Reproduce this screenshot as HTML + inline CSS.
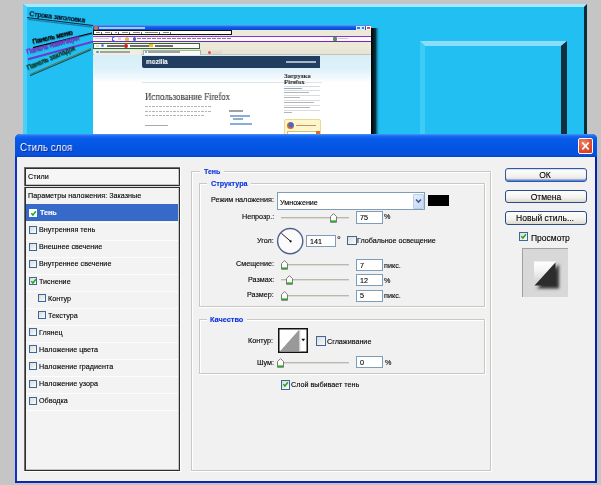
<!DOCTYPE html>
<html><head><meta charset="utf-8">
<style>
*{margin:0;padding:0;box-sizing:border-box}
html,body{width:601px;height:485px;overflow:hidden;background:#c6c5c5;-webkit-font-smoothing:antialiased;font-family:"Liberation Sans",sans-serif;position:relative}
.a{position:absolute}
.t{position:absolute;white-space:nowrap;line-height:1;color:#000;will-change:transform;-webkit-text-stroke:0.12px currentColor}
.cb{position:absolute;border:1px solid #3a67a0;background:linear-gradient(135deg,#dcdcd4,#fbfbf9)}
.inp{position:absolute;border:1px solid #7f9db9;background:#fff}
.btn{position:absolute;left:505px;width:82px;height:14px;border:1px solid #2a4a8c;border-radius:3px;background:linear-gradient(#fefefe,#f2f2ee 60%,#dcd8d0)}
.gh{position:absolute;height:2px;border-top:1px solid #c9c9c1;border-bottom:1px solid #fff}
.gv{position:absolute;width:2px;border-left:1px solid #c9c9c1;border-right:1px solid #fff}
</style></head><body>
<svg class="a" style="left:0;top:0" width="601" height="140">
<rect x="23" y="4" width="564" height="136" fill="#22c0f2"/>
<polygon points="23,4 587,4 584,7 27,7" fill="#a6e8fc"/>
<polygon points="23,4 27,7 27,140 23,140" fill="#4ccff8"/>
<polygon points="587,4 587,140 584,140 584,7" fill="#0d2c38"/>
<rect x="420" y="41" width="147" height="99" fill="#22c0f2"/>
<polygon points="420,41 567,41 561,46 425,46" fill="#8adefa"/>
<polygon points="420,41 425,46 425,140 420,140" fill="#3ecbf6"/>
<polygon points="567,41 567,140 561,140 561,46" fill="#10303e"/>
<defs><linearGradient id="sh" x1="0" x2="1" y1="0" y2="0"><stop offset="0" stop-color="#000"/><stop offset="0.5" stop-color="#0a3040"/><stop offset="1" stop-color="#22c0f2" stop-opacity="0"/></linearGradient></defs>
<rect x="371" y="28" width="9" height="112" fill="url(#sh)"/>
</svg>
<svg class="a" style="left:0;top:0" width="140" height="90"><path d="M28 19.3 L92 27" stroke="#0a3a5a" stroke-width="1.3" opacity="0.45"/><path d="M27 17.6 L94 25.6" stroke="#06102a" stroke-width="0.9"/><path d="M33 48.6 L92 34" stroke="#0a4a60" stroke-width="1" opacity="0.6"/><path d="M33 47.6 L92 33" stroke="#000" stroke-width="1.1"/><path d="M28 60 L93 42.3" stroke="#1a4a80" stroke-width="1" opacity="0.6"/><path d="M28 59 L93 41.3" stroke="#8a20d8" stroke-width="1.3"/><path d="M30 75.8 L91 49.8" stroke="#0a2a30" stroke-width="1.1" opacity="0.75"/><path d="M30 74.4 L91 48.4" stroke="#6a6a28" stroke-width="0.9"/></svg>
<div class="t" style="left:29.00px;top:9.60px;font-size:7.8px;color:#02081a;transform-origin:0 6.60px;transform:rotate(6.84deg) scaleX(0.88);text-shadow:0.3px 0 0 #02081a">Строка заголовка</div>
<div class="t" style="left:32.90px;top:38.07px;font-size:7.6px;color:#000;transform-origin:0 6.43px;transform:rotate(-13.42deg) scaleX(0.86);text-shadow:0.4px 0 0 #000,0.6px 0.8px 0 #0a5a70">Панель меню</div>
<div class="t" style="left:27.20px;top:48.17px;font-size:7.6px;color:#8a2ad0;transform-origin:0 6.43px;transform:rotate(-15.37deg) scaleX(0.84);text-shadow:0.4px 0 0 #8a2ad0,0.6px 0.8px 0 #2a4a80">Панель навигации</div>
<div class="t" style="left:28.40px;top:64.08px;font-size:7.7px;color:#163a28;transform-origin:0 6.52px;transform:rotate(-23.18deg) scaleX(0.85);text-shadow:0.4px 0 0 #163a28,0.6px 0.8px 0 #0a5a60">Панель закладок</div>
<div class="a" style="left:93px;top:25px;width:278px;height:109px;background:#fff;overflow:hidden"><div class="a" style="left:0;top:0;width:278px;height:5px;background:linear-gradient(#7aaaf6 0,#2a70ee 1px,#0a56e6 3px,#0848d4 5px)"></div><div class="a" style="left:0.5px;top:0.5px;width:4px;height:4px;border-radius:2px;background:#e8702a"></div><div class="a" style="left:6px;top:1.5px;width:46px;height:2px;background:#dfe8fa;opacity:.75"></div><div class="a" style="left:263px;top:0.5px;width:4.5px;height:4px;background:#3a78e8;border:0.5px solid #dfe8fa"></div><div class="a" style="left:267.5px;top:0.5px;width:4.5px;height:4px;background:#3a78e8;border:0.5px solid #dfe8fa"></div><div class="a" style="left:272.5px;top:0.5px;width:5px;height:4px;background:#e0502a;border:0.5px solid #fff"></div><div class="a" style="left:0;top:5px;width:278px;height:5.5px;background:#ece9d8"></div><div class="a" style="left:0;top:5px;width:139px;height:5px;border:1px solid #111;background:#fcfcfa"></div><div class="a" style="left:2px;top:6.5px;width:7px;height:2px;border-right:0.5px solid #666"></div><div class="a" style="left:3px;top:6.8px;width:4px;height:1.5px;background:#222;opacity:.55"></div><div class="a" style="left:11px;top:6.5px;width:8px;height:2px;border-right:0.5px solid #666"></div><div class="a" style="left:12px;top:6.8px;width:5px;height:1.5px;background:#222;opacity:.55"></div><div class="a" style="left:21px;top:6.5px;width:5px;height:2px;border-right:0.5px solid #666"></div><div class="a" style="left:22px;top:6.8px;width:2px;height:1.5px;background:#222;opacity:.55"></div><div class="a" style="left:28px;top:6.5px;width:9px;height:2px;border-right:0.5px solid #666"></div><div class="a" style="left:29px;top:6.8px;width:6px;height:1.5px;background:#222;opacity:.55"></div><div class="a" style="left:39px;top:6.5px;width:10px;height:2px;border-right:0.5px solid #666"></div><div class="a" style="left:40px;top:6.8px;width:7px;height:1.5px;background:#222;opacity:.55"></div><div class="a" style="left:51px;top:6.5px;width:16px;height:2px;border-right:0.5px solid #666"></div><div class="a" style="left:52px;top:6.8px;width:13px;height:1.5px;background:#222;opacity:.55"></div><div class="a" style="left:69px;top:6.5px;width:9px;height:2px;border-right:0.5px solid #666"></div><div class="a" style="left:70px;top:6.8px;width:6px;height:1.5px;background:#222;opacity:.55"></div><div class="a" style="left:0;top:10.5px;width:278px;height:6.5px;background:#fafaf8;border-top:1px solid #8c2edc;border-bottom:1px solid #7a24c4"></div><div class="a" style="left:2px;top:12.6px;width:14px;height:1.5px;background:#bbb;opacity:.6"></div><div class="a" style="left:18.5px;top:12px;width:3px;height:3.5px;border-radius:2px;border:1px solid #2a6ad0;border-right-color:transparent"></div><div class="a" style="left:25px;top:12px;width:3px;height:3px;background:#c8c8c0;opacity:.6"></div><div class="a" style="left:32px;top:12px;width:4px;height:3.5px;background:#e8c040;border-radius:2px 2px 0 0"></div><div class="a" style="left:39.5px;top:12px;width:3.5px;height:3.5px;border-radius:2px;background:#3a6ab8"></div><div class="a" style="left:44px;top:12.6px;width:95px;height:1.6px;background:repeating-linear-gradient(90deg,#334 0 4px,transparent 4px 5px);opacity:.6"></div><div class="a" style="left:240px;top:12px;width:3.5px;height:3.5px;background:#4a9a40;border-radius:1px"></div><div class="a" style="left:245px;top:12.8px;width:10px;height:1.4px;background:#999;opacity:.5"></div><div class="a" style="left:0;top:17px;width:278px;height:7px;background:#ece9d8"></div><div class="a" style="left:0;top:17.5px;width:107px;height:6.5px;border:1px solid #2c6a34;background:#fbfaf6"></div><div class="a" style="left:3px;top:19.5px;width:3px;height:2.5px;background:#e8e4c0"></div><div class="a" style="left:8px;top:19px;width:3px;height:3px;border-radius:2px;background:#5a8ae0"></div><div class="a" style="left:14px;top:20.2px;width:17px;height:1.5px;background:#222;opacity:.65"></div><div class="a" style="left:31px;top:19px;width:3.5px;height:3.5px;border-radius:2px;background:#d01818"></div><div class="a" style="left:37px;top:20.2px;width:22px;height:1.5px;background:#222;opacity:.65"></div><div class="a" style="left:56px;top:19px;width:3.5px;height:3px;background:#f0c020"></div><div class="a" style="left:62px;top:20.2px;width:18px;height:1.5px;background:#222;opacity:.65"></div><div class="a" style="left:0;top:24px;width:278px;height:6px;background:#e8e4d6;border-bottom:0.5px solid #c8c4b4"></div><div class="a" style="left:1px;top:24.5px;width:47px;height:5px;background:#f0ede2"></div><div class="a" style="left:3px;top:25.5px;width:2.5px;height:2.5px;border-radius:2px;background:#5a8ae0"></div><div class="a" style="left:7px;top:26.3px;width:30px;height:1.4px;background:#555;opacity:.5"></div><div class="a" style="left:50px;top:24.5px;width:58px;height:5.5px;background:#fafaf6;border:0.5px solid #b0b0a0;border-bottom:none"></div><div class="a" style="left:51.5px;top:25.5px;width:2.5px;height:2.5px;border-radius:2px;background:#3a9ad0"></div><div class="a" style="left:55px;top:26.3px;width:32px;height:1.3px;background:#333;opacity:.45"></div><div class="a" style="left:115px;top:25.5px;width:3px;height:3px;border-radius:2px;background:#e05050"></div><div class="a" style="left:119px;top:25.5px;width:10px;height:3px;background:#dedad0"></div><div class="a" style="left:0;top:30px;width:278px;height:28px;background:linear-gradient(#d6eef8,#e0f2fa 55%,#fff)"></div><div class="a" style="left:49px;top:30.5px;width:178px;height:12px;background:#213d60;border-radius:0 0 0 2px"></div><div class="t" style="left:52.6px;top:33.2px;font-size:7.6px;font-weight:bold;color:#f4f6fa;transform-origin:0 0;transform:scaleX(0.84)">mozilla</div><div class="a" style="left:193px;top:35.5px;width:30px;height:2px;background:#c8d4e0;opacity:.8"></div><div class="a" style="left:49px;top:57px;width:180px;height:1px;background:#dde4ea"></div><div class="t" style="left:52px;top:67.3px;font-family:'Liberation Serif',serif;font-size:9.8px;color:#3a3a3a;transform-origin:0 0;transform:scaleX(0.9)">Использование Firefox</div><div class="a" style="left:52px;top:81px;width:67px;height:1.4px;background:repeating-linear-gradient(90deg,#777 0 3px,transparent 3px 4px,#777 4px 6px,transparent 6px 7px);opacity:.55"></div><div class="a" style="left:52px;top:85.5px;width:67px;height:1.4px;background:repeating-linear-gradient(90deg,#777 0 3px,transparent 3px 4px,#777 4px 6px,transparent 6px 7px);opacity:.55"></div><div class="a" style="left:52px;top:90px;width:60px;height:1.4px;background:repeating-linear-gradient(90deg,#777 0 3px,transparent 3px 4px,#777 4px 6px,transparent 6px 7px);opacity:.55"></div><div class="a" style="left:52px;top:99.8px;width:23px;height:1.4px;background:#555;opacity:.5"></div><div class="a" style="left:136px;top:84.5px;width:14px;height:2px;background:#444;opacity:.5"></div><div class="a" style="left:137px;top:90px;width:20px;height:1.5px;background:#3a7ab8;opacity:.6"></div><div class="a" style="left:140px;top:93px;width:10px;height:1.5px;background:#3a7ab8;opacity:.6"></div><div class="a" style="left:137px;top:98px;width:22px;height:1.5px;background:#3a7ab8;opacity:.6"></div><div class="t" style="left:191px;top:49.3px;font-family:'Liberation Serif',serif;font-size:7px;font-weight:bold;color:#333;line-height:0.8;transform-origin:0 0;transform:scaleX(0.95)">Загрузка<br>Firefox</div><div class="a" style="left:191px;top:60.5px;width:36px;height:1px;background:#d8dce0"></div><div class="a" style="left:191px;top:65px;width:36px;height:1px;background:#d8dce0"></div><div class="a" style="left:191px;top:70px;width:36px;height:1px;background:#d8dce0"></div><div class="a" style="left:191px;top:75px;width:36px;height:1px;background:#d8dce0"></div><div class="a" style="left:191px;top:80px;width:36px;height:1px;background:#d8dce0"></div><div class="a" style="left:191px;top:85px;width:36px;height:1px;background:#d8dce0"></div><div class="a" style="left:191px;top:62.5px;width:18px;height:1.3px;background:#2a6aa0;opacity:.55"></div><div class="a" style="left:191px;top:67px;width:25px;height:1.3px;background:#777;opacity:.55"></div><div class="a" style="left:191px;top:72px;width:16px;height:1.3px;background:#777;opacity:.55"></div><div class="a" style="left:191px;top:77px;width:30px;height:1.3px;background:#777;opacity:.55"></div><div class="a" style="left:191px;top:82px;width:26px;height:1.3px;background:#777;opacity:.55"></div><div class="a" style="left:191px;top:87px;width:8px;height:1.3px;background:#777;opacity:.55"></div><div class="a" style="left:191px;top:94px;width:37px;height:20px;background:#fdf6cc;border:0.5px solid #e8d890;border-radius:2px"></div><div class="a" style="left:194px;top:97px;width:7px;height:7px;border-radius:4px;background:radial-gradient(circle at 60% 40%,#3a6ad0 30%,#e86a1a 60%)"></div><div class="a" style="left:203px;top:99.5px;width:20px;height:1.5px;background:#a05020;opacity:.6"></div><div class="a" style="left:194px;top:106px;width:30px;height:5px;background:#fff;border:0.5px solid #d0c080"></div><div class="a" style="left:223px;top:106px;width:4px;height:5px;background:#e06a20"></div></div><div class="a" style="left:15px;top:134px;width:582px;height:349px;background:#0a28b0;border-radius:5px 5px 0 0"></div>
<div class="a" style="left:15px;top:134px;width:582px;height:23px;border-radius:5px 5px 0 0;background:linear-gradient(#4a94fa 0px,#1a6af2 2px,#075ae8 5px,#0454e2 14px,#0650dc 19px,#0a50de 21px,#0440c8 23px)"></div>
<div class="a" style="left:15px;top:157px;width:2px;height:324px;background:#0b35c8"></div>
<div class="a" style="left:595px;top:157px;width:2px;height:324px;background:#0724a8"></div>
<div class="a" style="left:17px;top:157px;width:578px;height:324px;background:#f1f1f1"></div>
<div class="t" style="left:20px;top:143px;font-size:10.2px;color:#fff;font-weight:normal;transform-origin:0 0;transform:scaleX(0.95);letter-spacing:0.1px;-webkit-text-stroke:0;text-shadow:1px 1px 0 #0a2a90">Стиль слоя</div>
<div class="a" style="left:578px;top:138px;width:15px;height:16px;border:1px solid #fff;border-radius:2px;background:radial-gradient(circle at 35% 30%,#f08a6a,#e0482a 60%,#c83a1c)"></div>
<svg class="a" style="left:578px;top:138px" width="15" height="16"><path d="M4.3 4.5 L10.7 11.5 M10.7 4.5 L4.3 11.5" stroke="#fff" stroke-width="1.8"/></svg>
<div class="a" style="left:24px;top:167px;width:157px;height:20px;background:#fff"></div>
<div class="a" style="left:24px;top:167px;width:156px;height:1px;background:#6c6c6c"></div>
<div class="a" style="left:24px;top:167px;width:1px;height:19px;background:#6c6c6c"></div>
<div class="a" style="left:25px;top:168px;width:155px;height:18px;background:#2e2e2e"></div>
<div class="a" style="left:26px;top:169px;width:153px;height:16px;background:#c4c4c4"></div>
<div class="a" style="left:26px;top:169px;width:152px;height:15px;background:#f6f6f6"></div>
<div class="a" style="left:24px;top:186px;width:157px;height:286px;background:#fff"></div>
<div class="a" style="left:24px;top:186px;width:156px;height:1px;background:#6c6c6c"></div>
<div class="a" style="left:24px;top:186px;width:1px;height:285px;background:#6c6c6c"></div>
<div class="a" style="left:25px;top:187px;width:155px;height:284px;background:#2e2e2e"></div>
<div class="a" style="left:26px;top:188px;width:153px;height:282px;background:#c4c4c4"></div>
<div class="a" style="left:26px;top:188px;width:152px;height:281px;background:#f3f3f3"></div>
<div class="a" style="left:24px;top:186px;width:157px;height:1px;background:#dedede"></div>
<div class="t" style="left:28px;top:173px;font-size:7.2px;color:#000;font-weight:normal;">Стили</div>
<div class="t" style="left:28px;top:192px;font-size:7.2px;color:#000;font-weight:normal;">Параметры наложения: Заказные</div>
<div class="a" style="left:26px;top:204px;width:152px;height:17px;background:#3669c8"></div>
<div class="a" style="left:26px;top:222px;width:152px;height:1px;background:#fdfdfd"></div>
<div class="a" style="left:26px;top:240px;width:152px;height:1px;background:#fdfdfd"></div>
<div class="a" style="left:26px;top:257px;width:152px;height:1px;background:#fdfdfd"></div>
<div class="a" style="left:26px;top:274px;width:152px;height:1px;background:#fdfdfd"></div>
<div class="a" style="left:26px;top:291px;width:152px;height:1px;background:#fdfdfd"></div>
<div class="a" style="left:26px;top:308px;width:152px;height:1px;background:#fdfdfd"></div>
<div class="a" style="left:26px;top:325px;width:152px;height:1px;background:#fdfdfd"></div>
<div class="a" style="left:26px;top:342px;width:152px;height:1px;background:#fdfdfd"></div>
<div class="a" style="left:26px;top:359px;width:152px;height:1px;background:#fdfdfd"></div>
<div class="a" style="left:26px;top:376px;width:152px;height:1px;background:#fdfdfd"></div>
<div class="a" style="left:26px;top:393px;width:152px;height:1px;background:#fdfdfd"></div>
<div class="a" style="left:26px;top:410px;width:152px;height:1px;background:#fdfdfd"></div>
<div class="cb" style="left:29px;top:209px;width:8px;height:8px;background:#fff;border-color:#fff"><svg width="9" height="9" viewBox="0 0 9 9" style="position:absolute;left:-1px;top:-1px"><path d="M2.3 4.2 L3.9 6 L6.9 2.3" stroke="#1fa81f" stroke-width="1.5" fill="none"/></svg></div>
<div class="t" style="left:40px;top:209px;font-size:7.2px;color:#fff;font-weight:bold;">Тень</div>
<div class="cb" style="left:29px;top:226px;width:8px;height:8px"></div>
<div class="t" style="left:39px;top:226px;font-size:7.2px;color:#000;font-weight:normal;">Внутренняя тень</div>
<div class="cb" style="left:29px;top:243px;width:8px;height:8px"></div>
<div class="t" style="left:39px;top:243px;font-size:7.2px;color:#000;font-weight:normal;">Внешнее свечение</div>
<div class="cb" style="left:29px;top:260px;width:8px;height:8px"></div>
<div class="t" style="left:39px;top:260px;font-size:7.2px;color:#000;font-weight:normal;">Внутреннее свечение</div>
<div class="cb" style="left:29px;top:277px;width:8px;height:8px"><svg width="9" height="9" viewBox="0 0 9 9" style="position:absolute;left:-1px;top:-1px"><path d="M2.3 4.2 L3.9 6 L6.9 2.3" stroke="#1fa81f" stroke-width="1.5" fill="none"/></svg></div>
<div class="t" style="left:39px;top:278px;font-size:7.2px;color:#000;font-weight:normal;">Тиснение</div>
<div class="cb" style="left:38px;top:294px;width:8px;height:8px"></div>
<div class="t" style="left:48px;top:295px;font-size:7.2px;color:#000;font-weight:normal;">Контур</div>
<div class="cb" style="left:38px;top:311px;width:8px;height:8px"></div>
<div class="t" style="left:48px;top:312px;font-size:7.2px;color:#000;font-weight:normal;">Текстура</div>
<div class="cb" style="left:29px;top:328px;width:8px;height:8px"></div>
<div class="t" style="left:39px;top:329px;font-size:7.2px;color:#000;font-weight:normal;">Глянец</div>
<div class="cb" style="left:29px;top:345px;width:8px;height:8px"></div>
<div class="t" style="left:39px;top:346px;font-size:7.2px;color:#000;font-weight:normal;">Наложение цвета</div>
<div class="cb" style="left:29px;top:362px;width:8px;height:8px"></div>
<div class="t" style="left:39px;top:363px;font-size:7.2px;color:#000;font-weight:normal;">Наложение градиента</div>
<div class="cb" style="left:29px;top:380px;width:8px;height:8px"></div>
<div class="t" style="left:39px;top:380px;font-size:7.2px;color:#000;font-weight:normal;">Наложение узора</div>
<div class="cb" style="left:29px;top:397px;width:8px;height:8px"></div>
<div class="t" style="left:39px;top:397px;font-size:7.2px;color:#000;font-weight:normal;">Обводка</div>
<div class="a" style="left:191px;top:171px;width:1px;height:299px;background:#c9c9c1"></div>
<div class="a" style="left:192px;top:172px;width:1px;height:298px;background:#fff"></div>
<div class="a" style="left:490px;top:171px;width:1px;height:300px;background:#c9c9c1"></div>
<div class="a" style="left:491px;top:171px;width:1px;height:301px;background:#fff"></div>
<div class="a" style="left:191px;top:470px;width:300px;height:1px;background:#c9c9c1"></div>
<div class="a" style="left:191px;top:471px;width:301px;height:1px;background:#fff"></div>
<div class="a" style="left:191px;top:171px;width:300px;height:1px;background:#c9c9c1"></div>
<div class="a" style="left:192px;top:172px;width:298px;height:1px;background:#fff"></div>
<div class="a" style="left:200px;top:168px;width:24px;height:8px;background:#f1f1f1"></div>
<div class="t" style="left:204px;top:168px;font-size:7.0px;color:#0a32e0;font-weight:bold;">Тень</div>
<div class="a" style="left:199px;top:183px;width:1px;height:123px;background:#c9c9c1"></div>
<div class="a" style="left:200px;top:184px;width:1px;height:122px;background:#fff"></div>
<div class="a" style="left:484px;top:183px;width:1px;height:124px;background:#c9c9c1"></div>
<div class="a" style="left:485px;top:183px;width:1px;height:125px;background:#fff"></div>
<div class="a" style="left:199px;top:306px;width:286px;height:1px;background:#c9c9c1"></div>
<div class="a" style="left:199px;top:307px;width:287px;height:1px;background:#fff"></div>
<div class="a" style="left:199px;top:183px;width:286px;height:1px;background:#c9c9c1"></div>
<div class="a" style="left:200px;top:184px;width:284px;height:1px;background:#fff"></div>
<div class="a" style="left:207px;top:180px;width:44px;height:8px;background:#f1f1f1"></div>
<div class="t" style="left:211px;top:180px;font-size:7.2px;color:#0a32e0;font-weight:bold;">Структура</div>
<div class="a" style="left:199px;top:319px;width:1px;height:54px;background:#c9c9c1"></div>
<div class="a" style="left:200px;top:320px;width:1px;height:53px;background:#fff"></div>
<div class="a" style="left:484px;top:319px;width:1px;height:55px;background:#c9c9c1"></div>
<div class="a" style="left:485px;top:319px;width:1px;height:56px;background:#fff"></div>
<div class="a" style="left:199px;top:373px;width:286px;height:1px;background:#c9c9c1"></div>
<div class="a" style="left:199px;top:374px;width:287px;height:1px;background:#fff"></div>
<div class="a" style="left:199px;top:319px;width:286px;height:1px;background:#c9c9c1"></div>
<div class="a" style="left:200px;top:320px;width:284px;height:1px;background:#fff"></div>
<div class="a" style="left:207px;top:316px;width:40px;height:8px;background:#f1f1f1"></div>
<div class="t" style="left:210px;top:316px;font-size:7.35px;color:#0a32e0;font-weight:bold;">Качество</div>
<div class="t" style="right:327px;top:196px;font-size:7.2px;color:#000;font-weight:normal;">Режим наложения:</div>
<div class="a" style="left:277px;top:192px;width:148px;height:18px;border:1px solid #7f9db9;background:#fff"></div>
<div class="t" style="left:280px;top:199px;font-size:7.2px;color:#000;font-weight:normal;">Умножение</div>
<div class="a" style="left:413px;top:193.5px;width:10.5px;height:15px;background:linear-gradient(135deg,#e4eefc,#c4d6f4);border:0.5px solid #b8cceb;border-radius:1px"></div>
<svg class="a" style="left:413px;top:193px" width="11" height="16"><path d="M3 6.5 L5.5 9 L8 6.5" stroke="#4a5a88" stroke-width="1.6" fill="none"/></svg>
<div class="a" style="left:427.5px;top:194.5px;width:21px;height:11.5px;background:#000"></div>
<div class="t" style="right:327px;top:213px;font-size:7.2px;color:#000;font-weight:normal;">Непрозр.:</div>
<div class="a" style="left:281px;top:217px;width:68px;height:1px;background:#b8b8b0"></div>
<div class="a" style="left:281px;top:218px;width:68px;height:1px;background:#dcdcd4"></div>
<svg class="a" style="left:329.8px;top:213px" width="7" height="10" viewBox="0 0 7 10"><path d="M0.5 3.6 L3.5 0.6 L6.5 3.6 L6.5 9.3 L0.5 9.3 Z" fill="#fdfdfb" stroke="#6e6e66" stroke-width="0.9"/><rect x="0.9" y="7.4" width="5.2" height="1.6" fill="#22b022"/></svg>
<div class="inp" style="left:356px;top:211px;width:27px;height:13px"></div>
<div class="t" style="left:360px;top:214px;font-size:7.2px;color:#000;font-weight:normal;">75</div>
<div class="t" style="left:384px;top:213px;font-size:7.2px;color:#000;font-weight:normal;">%</div>
<div class="t" style="right:327px;top:237px;font-size:7.2px;color:#000;font-weight:normal;">Угол:</div>
<svg class="a" style="left:276px;top:226px" width="29" height="30"><circle cx="14.2" cy="15.1" r="12.6" fill="#fbfbfb" stroke="#50618e" stroke-width="1.4"/><path d="M14.6 15.3 L5.4 7.3" stroke="#222" stroke-width="1"/><circle cx="14.6" cy="15.3" r="1.1" fill="#111"/></svg>
<div class="inp" style="left:306px;top:234.5px;width:30px;height:12.5px"></div>
<div class="t" style="left:310px;top:238px;font-size:7.2px;color:#000;font-weight:normal;">141</div>
<div class="t" style="left:337px;top:235px;font-size:9.5px;color:#111;font-weight:normal;">°</div>
<div class="cb" style="left:347px;top:235.5px;width:9.5px;height:9.5px"></div>
<div class="t" style="left:357px;top:237px;font-size:7.2px;color:#000;font-weight:normal;">Глобальное освещение</div>
<div class="t" style="right:327px;top:260px;font-size:7.2px;color:#000;font-weight:normal;">Смещение:</div>
<div class="a" style="left:281px;top:263.5px;width:68px;height:1px;background:#b8b8b0"></div>
<div class="a" style="left:281px;top:264.5px;width:68px;height:1px;background:#dcdcd4"></div>
<svg class="a" style="left:281.2px;top:259.5px" width="7" height="10" viewBox="0 0 7 10"><path d="M0.5 3.6 L3.5 0.6 L6.5 3.6 L6.5 9.3 L0.5 9.3 Z" fill="#fdfdfb" stroke="#6e6e66" stroke-width="0.9"/><rect x="0.9" y="7.4" width="5.2" height="1.6" fill="#22b022"/></svg>
<div class="inp" style="left:356px;top:258.5px;width:27px;height:12px"></div>
<div class="t" style="left:360px;top:262px;font-size:7.2px;color:#000;font-weight:normal;">7</div>
<div class="t" style="left:384px;top:262px;font-size:7.2px;color:#000;font-weight:normal;">пикс.</div>
<div class="t" style="right:327px;top:276px;font-size:7.2px;color:#000;font-weight:normal;">Размах:</div>
<div class="a" style="left:281px;top:279px;width:68px;height:1px;background:#b8b8b0"></div>
<div class="a" style="left:281px;top:280px;width:68px;height:1px;background:#dcdcd4"></div>
<svg class="a" style="left:285.7px;top:275px" width="7" height="10" viewBox="0 0 7 10"><path d="M0.5 3.6 L3.5 0.6 L6.5 3.6 L6.5 9.3 L0.5 9.3 Z" fill="#fdfdfb" stroke="#6e6e66" stroke-width="0.9"/><rect x="0.9" y="7.4" width="5.2" height="1.6" fill="#22b022"/></svg>
<div class="inp" style="left:356px;top:274px;width:27px;height:12px"></div>
<div class="t" style="left:360px;top:277px;font-size:7.2px;color:#000;font-weight:normal;">12</div>
<div class="t" style="left:384px;top:277px;font-size:7.2px;color:#000;font-weight:normal;">%</div>
<div class="t" style="right:327px;top:291px;font-size:7.2px;color:#000;font-weight:normal;">Размер:</div>
<div class="a" style="left:281px;top:294.5px;width:68px;height:1px;background:#b8b8b0"></div>
<div class="a" style="left:281px;top:295.5px;width:68px;height:1px;background:#dcdcd4"></div>
<svg class="a" style="left:281.2px;top:290.5px" width="7" height="10" viewBox="0 0 7 10"><path d="M0.5 3.6 L3.5 0.6 L6.5 3.6 L6.5 9.3 L0.5 9.3 Z" fill="#fdfdfb" stroke="#6e6e66" stroke-width="0.9"/><rect x="0.9" y="7.4" width="5.2" height="1.6" fill="#22b022"/></svg>
<div class="inp" style="left:356px;top:289.5px;width:27px;height:12px"></div>
<div class="t" style="left:360px;top:292px;font-size:7.2px;color:#000;font-weight:normal;">5</div>
<div class="t" style="left:384px;top:292px;font-size:7.2px;color:#000;font-weight:normal;">пикс.</div>
<div class="t" style="right:328px;top:337px;font-size:7.2px;color:#000;font-weight:normal;">Контур:</div>
<svg class="a" style="left:278px;top:328px" width="30" height="25"><rect x="0.75" y="0.75" width="28.5" height="23.5" fill="#fff" stroke="#111" stroke-width="1.5"/><polygon points="2,23.2 21.3,1.6 21.3,23.2" fill="#999"/><rect x="21.3" y="1.5" width="1" height="22" fill="#c8c8c8"/><path d="M23.3 10.8 L27.2 10.8 L25.25 13.3 Z" fill="#111"/></svg>
<div class="cb" style="left:316px;top:336px;width:9.5px;height:9.5px"></div>
<div class="t" style="left:327px;top:338px;font-size:7.2px;color:#000;font-weight:normal;">Сглаживание</div>
<div class="t" style="right:327px;top:359px;font-size:7.2px;color:#000;font-weight:normal;">Шум:</div>
<div class="a" style="left:281px;top:362px;width:68px;height:1px;background:#b8b8b0"></div>
<div class="a" style="left:281px;top:363px;width:68px;height:1px;background:#dcdcd4"></div>
<svg class="a" style="left:277.1px;top:358px" width="7" height="10" viewBox="0 0 7 10"><path d="M0.5 3.6 L3.5 0.6 L6.5 3.6 L6.5 9.3 L0.5 9.3 Z" fill="#fdfdfb" stroke="#6e6e66" stroke-width="0.9"/><rect x="0.9" y="7.4" width="5.2" height="1.6" fill="#22b022"/></svg>
<div class="inp" style="left:356px;top:356px;width:27px;height:12px"></div>
<div class="t" style="left:360px;top:359px;font-size:7.2px;color:#000;font-weight:normal;">0</div>
<div class="t" style="left:385px;top:359px;font-size:7.2px;color:#000;font-weight:normal;">%</div>
<div class="cb" style="left:280.5px;top:380px;width:9.5px;height:9.5px"><svg width="9" height="9" viewBox="0 0 9 9" style="position:absolute;left:-1px;top:-1px"><path d="M2.3 4.2 L3.9 6 L6.9 2.3" stroke="#1fa81f" stroke-width="1.5" fill="none"/></svg></div>
<div class="t" style="left:291px;top:381px;font-size:7.2px;color:#000;font-weight:normal;">Слой выбивает тень</div>
<div class="btn" style="top:168px;height:13.5px;border-color:#38569c;box-shadow:inset 0 -1.5px 0 #5a86e8,inset 0 1px 0 #cfe0fc"></div>
<div class="t" style="left:445px;width:200px;text-align:center;top:171px;font-size:8.5px;color:#000;font-weight:normal;">ОК</div>
<div class="btn" style="top:189.5px;height:13.5px"></div>
<div class="t" style="left:446px;width:200px;text-align:center;top:193px;font-size:8.5px;color:#000;font-weight:normal;">Отмена</div>
<div class="btn" style="top:211px;height:13.5px"></div>
<div class="t" style="left:445px;width:200px;text-align:center;top:214px;font-size:8.5px;color:#000;font-weight:normal;">Новый стиль...</div>
<div class="cb" style="left:519px;top:231.5px;width:9px;height:9px"><svg width="9" height="9" viewBox="0 0 9 9" style="position:absolute;left:-1px;top:-1px"><path d="M2.3 4.2 L3.9 6 L6.9 2.3" stroke="#1fa81f" stroke-width="1.5" fill="none"/></svg></div>
<div class="t" style="left:531px;top:234px;font-size:8.5px;color:#000;font-weight:normal;">Просмотр</div>
<div class="a" style="left:522px;top:248px;width:46px;height:49px;background:#d8d8d8;border-top:1px solid #a0a0a0;border-left:1px solid #a0a0a0"></div>
<svg class="a" style="left:522px;top:248px" width="46" height="50"><defs><filter id="bl" x="-50%" y="-50%" width="200%" height="200%"><feGaussianBlur stdDeviation="1.4"/></filter><linearGradient id="wg" x1="0" y1="0" x2="0" y2="1"><stop offset="0" stop-color="#fff"/><stop offset="0.35" stop-color="#f4f4f4"/><stop offset="0.8" stop-color="#d8d8d8"/></linearGradient></defs><polygon points="12,13.5 34,13.5 12,38" fill="url(#wg)"/><polygon points="15,40.5 37,16 37,40.5" fill="#333" filter="url(#bl)"/><polygon points="12.5,37.5 33.5,14.5 33.5,37.5" fill="#2c2c2c"/></svg>
</body></html>
